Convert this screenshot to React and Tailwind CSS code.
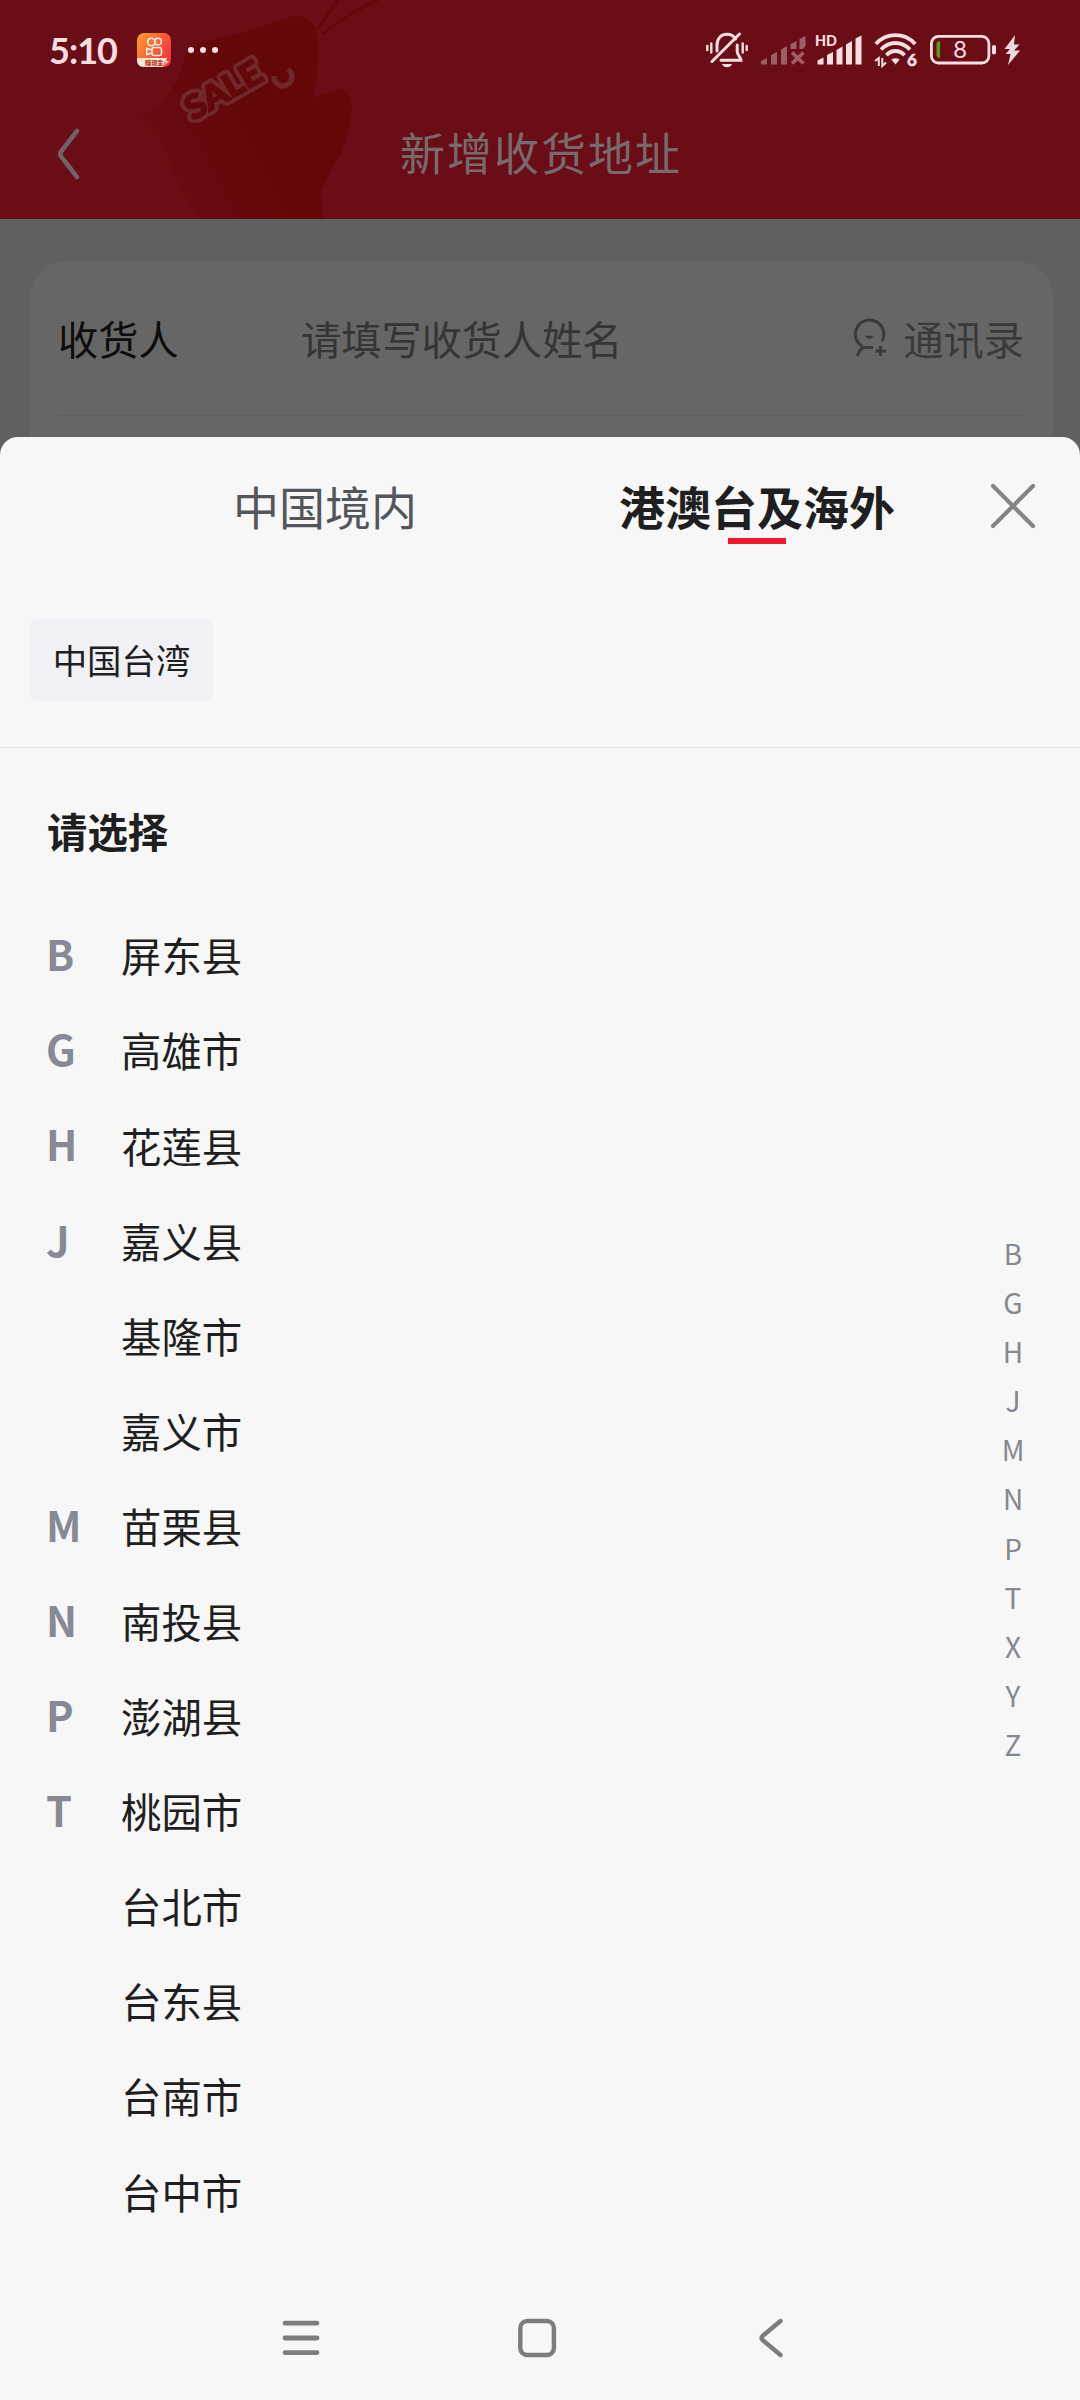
const regions = [
  { letter: "B", name: "屏东县" },
  { letter: "G", name: "高雄市" },
  { letter: "H", name: "花莲县" },
  { letter: "J", name: "嘉义县" },
  { letter: "", name: "基隆市" },
  { letter: "", name: "嘉义市" },
  { letter: "M", name: "苗栗县" },
  { letter: "N", name: "南投县" },
  { letter: "P", name: "澎湖县" },
  { letter: "T", name: "桃园市" },
  { letter: "", name: "台北市" },
  { letter: "", name: "台东县" },
  { letter: "", name: "台南市" },
  { letter: "", name: "台中市" },
]

const indexLetters = ["B", "G", "H", "J", "M", "N", "P", "T", "X", "Y", "Z"]

function SaleBag() {
  return (
    <svg className="absolute left-0 top-0" width="400" height="219" viewBox="0 0 400 219" fill="none">
      <defs>
        <linearGradient id="bag" gradientUnits="userSpaceOnUse" x1="130" y1="170" x2="235" y2="115">
          <stop offset="0" stopColor="#630709" stopOpacity="0.1" />
          <stop offset="1" stopColor="#630709" />
        </linearGradient>
      </defs>
      <path
        d="M186 54 Q192 42 240 33 L292 16 Q312 14 317 34 Q320 64 314 97 L340 89 Q352 89 352 108 Q350 140 335 164 L321 190 L323 219 H198 L178 184 L160 140 L134 115 L160 107 L177 80 Z"
        fill="url(#bag)"
      />
      <path d="M317 30 L338 0 M323 34 Q350 12 378 0" stroke="#630709" strokeWidth="3" />
      <g transform="translate(193 121) rotate(-30)">
        <text
          x="0"
          y="0"
          textLength="83"
          lengthAdjust="spacingAndGlyphs"
          fontSize="33"
          fontWeight="900"
          fontFamily="Lato, sans-serif"
          stroke="#70282b"
          strokeWidth="9"
          strokeLinejoin="round"
        >
          SALE
        </text>
        <text
          x="0"
          y="0"
          textLength="83"
          lengthAdjust="spacingAndGlyphs"
          fontSize="33"
          fontWeight="900"
          fontFamily="Lato, sans-serif"
          fill="#630709"
          stroke="#630709"
          strokeWidth="1.6"
        >
          SALE
        </text>
      </g>
      <path d="M274 76 A9 9 0 1 0 288 69.5" stroke="#70282b" strokeWidth="5.5" />
    </svg>
  )
}

function AppBadge() {
  return (
    <svg width="34" height="34" viewBox="0 0 34 34" fill="none">
      <defs>
        <linearGradient id="badge" x1="0" y1="0" x2="1" y2="0.6">
          <stop offset="0" stopColor="#fba12f" />
          <stop offset="0.5" stopColor="#fb6a35" />
          <stop offset="1" stopColor="#f5333f" />
        </linearGradient>
      </defs>
      <rect width="34" height="34" rx="7" fill="url(#badge)" />
      <circle cx="14.3" cy="9" r="3.7" stroke="#fff2e8" strokeWidth="1.5" />
      <circle cx="21" cy="8.5" r="3.3" stroke="#fff2e8" strokeWidth="1.5" />
      <rect x="15" y="14.5" width="9.5" height="8" rx="2" stroke="#fff2e8" strokeWidth="1.5" />
      <path d="M14.5 17 L9.7 15.2 V21.8 L14.5 20" stroke="#fff2e8" strokeWidth="1.5" strokeLinejoin="round" />
      <path d="M0 25 H29 L26 34 H7 Q0 34 0 27 Z" fill="#fbe9dc" />
      <text x="8" y="32" fontSize="6.2" fontWeight="900" fill="#c63a24" fontFamily="Noto Sans CJK SC, sans-serif">
        赚现金
      </text>
      <path d="M30 24 L26 29 H29 L27 33 L32 28 H29.5 Z" fill="#ffd9a8" />
    </svg>
  )
}

function MutedBell() {
  return (
    <svg width="42" height="36" viewBox="0 0 42 36" fill="none" stroke="#f6dfe2" strokeLinecap="round">
      <path d="M1.3 14 V18 M5.3 11.5 V20.5 M36.7 11.5 V20.5 M40.7 14 V18" strokeWidth="2.4" />
      <path
        d="M11 19 V13.5 C11 6 15.5 2.2 21 2.2 C25 2.2 28 4 29.5 7 M31.2 13 V19.5 C31.2 23 35 25.5 35 28.3 H15"
        strokeWidth="3"
      />
      <path d="M33.5 2 L6 29.5" strokeWidth="3" />
      <path d="M16 32 H26 Q24.5 35.3 21 35.3 Q17.5 35.3 16 32 Z" fill="#f6dfe2" stroke="none" />
    </svg>
  )
}

function NoSignal() {
  return (
    <svg width="45" height="29" viewBox="0 0 45 29" fill="#9c5e67">
      <path d="M0 28.5 V25 L6 22 V28.5 Z" />
      <path d="M10 28.5 V19 L16 16 V28.5 Z" />
      <path d="M20 28.5 V13.5 L26 10 V28.5 Z" />
      <path d="M29.5 13 V8 L35.5 5 V13 Z" />
      <path d="M38.5 13 V3 L44.5 0 V10 L42 13 Z" />
      <path d="M31 16.5 L42.5 27.5 M42.5 16.5 L31 27.5" stroke="#9c5e67" strokeWidth="3.6" />
    </svg>
  )
}

function HdSignal() {
  return (
    <svg className="overflow-visible" width="47" height="30" viewBox="0 0 47 30" fill="#f6dfe2">
      <text x="0" y="11.3" fontSize="15" fontWeight="900" textLength="22" lengthAdjust="spacingAndGlyphs" fontFamily="Lato, sans-serif">
        HD
      </text>
      <path d="M2.5 29.5 V25.5 L8.5 22.5 V29.5 Z" />
      <path d="M12 29.5 V20 L18 17 V29.5 Z" />
      <path d="M21.5 29.5 V15 L27.5 11.5 V29.5 Z" />
      <path d="M31 29.5 V9.5 L37 6 V29.5 Z" />
      <path d="M40.5 29.5 V3.5 L46.5 0.5 V29.5 Z" />
    </svg>
  )
}

function Wifi6() {
  return (
    <svg className="overflow-visible" width="44" height="34" viewBox="0 0 44 34" fill="none" stroke="#f6dfe2">
      <path d="M1.8 11 Q10 2.2 21.5 2.2 Q33 2.2 41.2 11" strokeWidth="3.8" />
      <path d="M7 16.5 Q13.5 10 21.5 10 Q29.5 10 36 16.5" strokeWidth="3.8" />
      <path d="M12.5 22.3 Q16 18 21.5 18 Q27 18 30.5 22.3" strokeWidth="3.8" />
      <path d="M17.3 26.5 Q21.5 24 25.7 26.5 L21.5 31.5 Z" fill="#f6dfe2" stroke="none" />
      <path d="M1 28 L4.8 25 V33 M8.3 25 V33 L12 29.5" strokeWidth="2" />
      <text x="33" y="33" fontSize="17" fontWeight="900" fill="#f6dfe2" stroke="#f6dfe2" strokeWidth="0.5" fontFamily="Lato, sans-serif">
        6
      </text>
    </svg>
  )
}

function Battery() {
  return (
    <svg width="67" height="30" viewBox="0 0 67 30" fill="none">
      <rect x="1.4" y="1.4" width="57.5" height="26.6" rx="7" stroke="#f6dfe2" strokeWidth="2.8" />
      <path d="M10 6 V23 Q6.5 23 6.5 19.5 V9.5 Q6.5 6 10 6 Z" fill="#5f9a17" />
      <rect x="62" y="10" width="4" height="9.5" rx="2" fill="#f6dfe2" />
      <text x="30" y="23" textAnchor="middle" fontSize="23" fill="#f6dfe2" fontFamily="Inter, sans-serif">
        8
      </text>
    </svg>
  )
}

function StatusBar() {
  return (
    <div className="relative flex h-[100px] items-center pl-[49px] pr-[60px]">
      <span className="w-[70px] font-[Lato] text-[36px] font-bold leading-none tracking-[-1px] text-[#f6dfe2]">5:10</span>
      <div className="ml-[18px]">
        <AppBadge />
      </div>
      <div className="ml-[17px] flex gap-[6px]">
        <span className="size-[6px] rounded-full bg-[#f6dfe2]" />
        <span className="size-[6px] rounded-full bg-[#f6dfe2]" />
        <span className="size-[6px] rounded-full bg-[#f6dfe2]" />
      </div>
      <div className="ml-auto flex items-center">
        <MutedBell />
        <div className="ml-[13px]">
          <NoSignal />
        </div>
        <div className="ml-[9px]">
          <HdSignal />
        </div>
        <div className="ml-[12px]">
          <Wifi6 />
        </div>
        <div className="ml-[12px]">
          <Battery />
        </div>
        <svg className="ml-[7px]" width="16" height="30" viewBox="0 0 16 30" fill="#eadade">
          <path d="M11 0 L0.5 14 H6 L1.5 19 H6.5 L4 30 L16 15.5 H10 L15.5 9.5 H10 Z" />
        </svg>
      </div>
    </div>
  )
}

function Header() {
  return (
    <header className="relative h-[219px] bg-[#6b0d16]">
      <SaleBag />
      <StatusBar />
      <div className="relative flex h-[108px] items-center">
        <svg className="ml-[57px]" width="24" height="52" viewBox="0 0 24 52" fill="none">
          <path
            d="M20 3 L4 23.5 Q2.5 26 4 28.5 L20 49"
            stroke="#6e6466"
            strokeWidth="4.5"
            strokeLinecap="round"
          />
        </svg>
        <h1 className="mb-[5px] ml-[319px] text-[45px] leading-none tracking-[2px] text-[#776a6c]">新增收货地址</h1>
      </div>
    </header>
  )
}

function ContactForm() {
  return (
    <div className="h-[218px] bg-[#606060] pl-[30px] pr-[27px] pt-[42px]">
      <div className="h-full rounded-t-[36px] bg-[#666666] px-[28px]">
        <div className="flex h-[155px] items-center border-b border-[#5e5e5e] text-[40.2px] leading-none">
          <span className="w-[243px] text-[#0d0d0d]">收货人</span>
          <span className="text-[#353535]">请填写收货人姓名</span>
          <svg className="ml-auto" width="34" height="40" viewBox="0 0 34 40" fill="none" stroke="#3a3a3c">
            <path d="M29.5 22 A14.2 14.2 0 1 0 8 27.5" strokeWidth="3" strokeLinecap="round" />
            <path d="M20 29.5 H10.5 Q6 32 4.5 38" strokeWidth="3" />
            <path d="M12 18 H20 Q19 20.5 16 20.5 Q13 20.5 12 18 Z" fill="#3a3a3c" strokeWidth="0.5" />
            <path d="M27.5 28 V38 M22.5 33 H33" strokeWidth="2.8" />
          </svg>
          <span className="ml-[16px] mr-[1px] text-[#3a3a3c]">通讯录</span>
        </div>
      </div>
    </div>
  )
}

function Tabs() {
  return (
    <div className="flex h-[142px] pt-[42px] text-[46px] leading-[52px]">
      <span className="ml-[233px] w-[385px] text-[#53565d]">中国境内</span>
      <div className="flex w-[278px] flex-col items-center">
        <span className="whitespace-nowrap font-bold text-[#1f1f21]">港澳台及海外</span>
        <span className="mt-[7px] h-[6px] w-[58px] bg-[#f0182d]" />
      </div>
      <svg className="ml-[94px] mt-[4px]" width="46" height="46" viewBox="0 0 46 46" fill="none">
        <path d="M3 3 L43 43 M43 3 L3 43" stroke="#858585" strokeWidth="4.2" strokeLinecap="round" />
      </svg>
    </div>
  )
}

function NavBar() {
  return (
    <nav className="mt-auto flex h-[124px] items-center pl-[282px]">
      <svg width="38" height="36" viewBox="0 0 38 36" fill="none">
        <path d="M3 3.2 H35 M3 18 H35 M3 32.6 H35" stroke="#7d7d7d" strokeWidth="4.8" strokeLinecap="round" />
      </svg>
      <svg className="ml-[197px]" width="40" height="40" viewBox="0 0 40 40" fill="none">
        <rect x="3.3" y="3" width="33.6" height="34" rx="7" stroke="#7d7d7d" strokeWidth="4.4" />
      </svg>
      <svg className="ml-[201px]" width="26" height="40" viewBox="0 0 26 40" fill="none">
        <path d="M22.5 3 L4.5 18 Q2.5 20 4.5 22 L22.5 37" stroke="#7d7d7d" strokeWidth="4.4" strokeLinecap="round" />
      </svg>
    </nav>
  )
}

export default function App() {
  return (
    <div className="flex h-[2400px] w-[1080px] flex-col overflow-hidden bg-[#616161] font-['Noto_Sans_CJK_SC',sans-serif]">
      <Header />
      <ContactForm />

      {/* Region picker */}
      <section className="relative flex flex-1 flex-col rounded-t-[18px] bg-[#f7f7f7]">
        <Tabs />

        <div className="flex h-[169px] items-start border-b border-[#e2e2e4] pl-[30px] pt-[40px]">
          <span className="flex h-[82px] w-[183px] items-center justify-center rounded-[8px] bg-[#f0f0f5] pb-[2px] text-[34.4px] leading-none text-[#1f1f21]">
            中国台湾
          </span>
        </div>

        <h2 className="mt-[63px] pl-[47px] text-[40.4px] font-bold leading-[40px] text-[#1f1f21]">请选择</h2>

        <ul className="mt-[57px]">
          {regions.map(({ letter, name }) => (
            <li key={name} className="flex h-[95.1px] items-center leading-none">
              <span className="mb-[3px] ml-[46px] w-[75px] text-[41.5px] font-bold text-[#878a95]">{letter}</span>
              <span className="text-[40.4px] text-[#1f1f21]">{name}</span>
            </li>
          ))}
        </ul>

        {/* Quick index */}
        <div className="absolute left-[993px] top-[792px] flex w-[40px] flex-col items-center text-[28px] leading-[49.1px] text-[#85888f]">
          {indexLetters.map((letter) => (
            <span key={letter}>{letter}</span>
          ))}
        </div>

        <NavBar />
      </section>
    </div>
  )
}
